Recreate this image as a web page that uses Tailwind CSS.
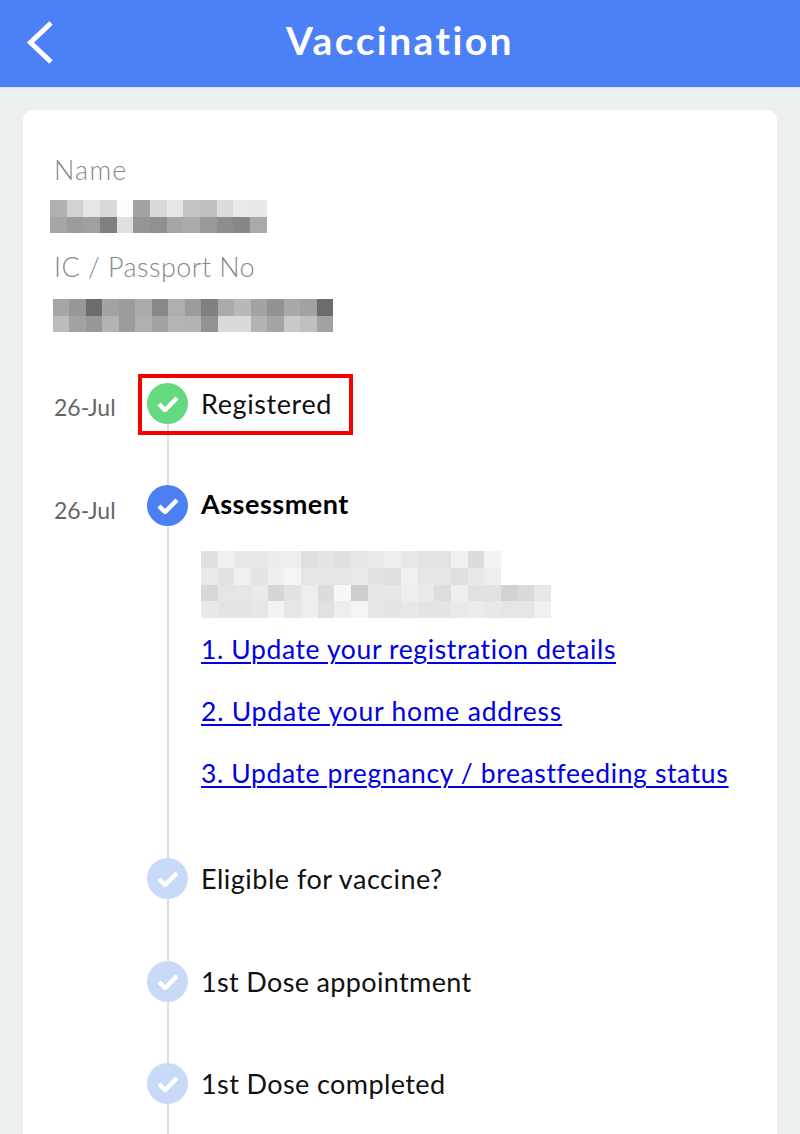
<!DOCTYPE html>
<html lang="en">
<head>
    <meta charset="UTF-8">
    <meta name="viewport" content="width=device-width, initial-scale=1.0">
    <title>Vaccination</title>
    <script src="https://cdn.jsdelivr.net/npm/@tailwindcss/browser@4"></script>
</head>
<body class="bg-[#ebeff0] h-[1134px] overflow-hidden flex flex-col font-['Lato',sans-serif]">
    <!-- Header -->
    <header class="bg-[#4c80f6] h-[88px] shrink-0 border-b border-[#dfe7f8] flex items-center justify-center relative">
        <svg class="absolute left-[26px] top-[21px]" width="28" height="44" viewBox="0 0 28 44" fill="none" stroke="#fff" stroke-width="5">
            <path d="M25 2 L4.5 21.5 L25 41"/>
        </svg>
        <h1 class="text-white text-[39px] font-bold tracking-[2.4px] leading-none -mt-[7px]">Vaccination</h1>
    </header>

    <!-- Card -->
    <main class="flex-1 min-h-0 mt-[22px] mx-[23px] bg-white rounded-t-[10px] pl-[32px] pt-[42px] overflow-hidden flex flex-col">
        <p class="-ml-[1px] text-[27px] leading-[36px] font-light tracking-[1.2px] text-[#888888]">Name</p>
        <div class="grid grid-cols-[repeat(13,16.67px)] grid-rows-[repeat(2,16.5px)] -ml-[5px] mt-[12px]">
            <div class="bg-[#b0b0b0]"></div><div class="bg-[#d2d2d2]"></div><div class="bg-[#e6e6e6]"></div><div class="bg-[#dadada]"></div><div class="bg-[#fdfdfd]"></div><div class="bg-[#a3a3a3]"></div><div class="bg-[#d9d9d9]"></div><div class="bg-[#e7e7e7]"></div><div class="bg-[#c5c5c5]"></div><div class="bg-[#c0c0c0]"></div><div class="bg-[#dcdcdc]"></div><div class="bg-[#eaeaea]"></div><div class="bg-[#e8e8e8]"></div>
            <div class="bg-[#a6a6a6]"></div><div class="bg-[#9c9c9c]"></div><div class="bg-[#a0a0a0]"></div><div class="bg-[#808080]"></div><div class="bg-[#e0e0e0]"></div><div class="bg-[#959595]"></div><div class="bg-[#909090]"></div><div class="bg-[#a6a6a6]"></div><div class="bg-[#ababab]"></div><div class="bg-[#999999]"></div><div class="bg-[#8d8d8d]"></div><div class="bg-[#878787]"></div><div class="bg-[#aaaaaa]"></div>
        </div>
        <p class="-ml-[1px] text-[27px] leading-[36px] font-light tracking-[0.45px] text-[#888888] mt-[16px]">IC / Passport No</p>
        <div class="grid grid-cols-[repeat(17,16.47px)] grid-rows-[repeat(2,16.5px)] -ml-[2px] mt-[14px]">
            <div class="bg-[#a6a6a6]"></div><div class="bg-[#989898]"></div><div class="bg-[#6c6c6c]"></div><div class="bg-[#a3a3a3]"></div><div class="bg-[#9c9c9c]"></div><div class="bg-[#ababab]"></div><div class="bg-[#888888]"></div><div class="bg-[#aeaeae]"></div><div class="bg-[#9c9c9c]"></div><div class="bg-[#808080]"></div><div class="bg-[#aaaaaa]"></div><div class="bg-[#b8b8b8]"></div><div class="bg-[#a3a3a3]"></div><div class="bg-[#929292]"></div><div class="bg-[#a9a9a9]"></div><div class="bg-[#a2a2a2]"></div><div class="bg-[#6c6c6c]"></div>
            <div class="bg-[#bcbcbc]"></div><div class="bg-[#a2a2a2]"></div><div class="bg-[#989898]"></div><div class="bg-[#b3b3b3]"></div><div class="bg-[#9c9c9c]"></div><div class="bg-[#b0b0b0]"></div><div class="bg-[#a3a3a3]"></div><div class="bg-[#b5b5b5]"></div><div class="bg-[#b3b3b3]"></div><div class="bg-[#939393]"></div><div class="bg-[#dadada]"></div><div class="bg-[#dadada]"></div><div class="bg-[#b3b3b3]"></div><div class="bg-[#a4a4a4]"></div><div class="bg-[#c9c9c9]"></div><div class="bg-[#bfbfbf]"></div><div class="bg-[#a2a2a2]"></div>
        </div>

        <!-- Timeline -->
        <div class="mt-[51px]">
            <!-- Registered -->
            <div class="flex h-[102px] relative">
                <span class="-ml-[1px] w-[93px] pt-[8px] text-[23px] leading-[32px] text-[#666666]">26-Jul</span>
                <div class="w-[41px] flex flex-col items-center">
                    <div class="w-[41px] h-[41px] rounded-full bg-[#65d97f] flex items-center justify-center shrink-0">
                        <svg width="22" height="16" viewBox="0 0 22 16" fill="none" stroke="#fff" stroke-width="4.5"><path d="M2 8 L8 14 L20 2"/></svg>
                    </div>
                    <div class="w-[2px] flex-1 bg-[#dedede]"></div>
                </div>
                <p class="pl-[13px] text-[27px] leading-[41px] tracking-[0.6px] text-[#111111]">Registered</p>
                <div class="absolute left-[83px] -top-[9px] w-[215px] h-[61px] border-[4px] border-[#f80000]"></div>
            </div>
            <!-- Assessment -->
            <div class="flex h-[373px]">
                <span class="-ml-[1px] w-[93px] pt-[9px] text-[23px] leading-[32px] text-[#666666]">26-Jul</span>
                <div class="w-[41px] flex flex-col items-center">
                    <div class="w-[41px] h-[41px] rounded-full bg-[#4c80f0] flex items-center justify-center shrink-0">
                        <svg width="22" height="16" viewBox="0 0 22 16" fill="none" stroke="#fff" stroke-width="4.5"><path d="M2 8 L8 14 L20 2"/></svg>
                    </div>
                    <div class="w-[2px] flex-1 bg-[#dedede]"></div>
                </div>
                <div class="pl-[13px] flex flex-col items-start">
                    <p class="-mt-[2px] text-[27px] leading-[41px] font-bold tracking-[0.5px] text-black">Assessment</p>
                    <div class="grid grid-cols-[repeat(21,16.67px)] grid-rows-[repeat(4,16.75px)] mt-[27px]">
                        <div class="bg-[#e0e0e0]"></div><div class="bg-[#f0f0f0]"></div><div class="bg-[#e8e8e8]"></div><div class="bg-[#e8e8e8]"></div><div class="bg-[#ededed]"></div><div class="bg-[#eeeeee]"></div><div class="bg-[#e0e0e0]"></div><div class="bg-[#e4e4e4]"></div><div class="bg-[#e0e0e0]"></div><div class="bg-[#e6e6e6]"></div><div class="bg-[#eaeaea]"></div><div class="bg-[#eeeeee]"></div><div class="bg-[#e8e8e8]"></div><div class="bg-[#e3e3e3]"></div><div class="bg-[#e3e3e3]"></div><div class="bg-[#f0f0f0]"></div><div class="bg-[#dcdcdc]"></div><div class="bg-[#f3f3f3]"></div><div></div><div></div><div></div>
                        <div class="bg-[#eaeaea]"></div><div class="bg-[#e2e2e2]"></div><div class="bg-[#f0f0f0]"></div><div class="bg-[#e4e4e4]"></div><div class="bg-[#efefef]"></div><div class="bg-[#f5f5f5]"></div><div class="bg-[#e6e6e6]"></div><div class="bg-[#e5e5e5]"></div><div class="bg-[#e6e6e6]"></div><div class="bg-[#eaeaea]"></div><div class="bg-[#e2e2e2]"></div><div class="bg-[#dfdfdf]"></div><div class="bg-[#f0f0f0]"></div><div class="bg-[#e6e6e6]"></div><div class="bg-[#e6e6e6]"></div><div class="bg-[#e0e0e0]"></div><div class="bg-[#e8e8e8]"></div><div class="bg-[#eeeeee]"></div><div></div><div></div><div></div>
                        <div class="bg-[#d8d8d8]"></div><div class="bg-[#e5e5e5]"></div><div class="bg-[#e6e6e6]"></div><div class="bg-[#eaeaea]"></div><div class="bg-[#d6d6d6]"></div><div class="bg-[#e2e2e2]"></div><div class="bg-[#eeeeee]"></div><div class="bg-[#dcdcdc]"></div><div class="bg-[#f8f8f8]"></div><div class="bg-[#cccccc]"></div><div class="bg-[#e6e6e6]"></div><div class="bg-[#e6e6e6]"></div><div class="bg-[#eeeeee]"></div><div class="bg-[#eaeaea]"></div><div class="bg-[#dddddd]"></div><div class="bg-[#efefef]"></div><div class="bg-[#e2e2e2]"></div><div class="bg-[#e2e2e2]"></div><div class="bg-[#d2d2d2]"></div><div class="bg-[#dadada]"></div><div class="bg-[#e8e8e8]"></div>
                        <div class="bg-[#e9e9e9]"></div><div class="bg-[#e4e4e4]"></div><div class="bg-[#e4e4e4]"></div><div class="bg-[#e6e6e6]"></div><div class="bg-[#f3f3f3]"></div><div class="bg-[#e6e6e6]"></div><div class="bg-[#eeeeee]"></div><div class="bg-[#e1e1e1]"></div><div class="bg-[#eeeeee]"></div><div class="bg-[#f4f4f4]"></div><div class="bg-[#e6e6e6]"></div><div class="bg-[#e4e4e4]"></div><div class="bg-[#e8e8e8]"></div><div class="bg-[#e4e4e4]"></div><div class="bg-[#e4e4e4]"></div><div class="bg-[#eaeaea]"></div><div class="bg-[#ececec]"></div><div class="bg-[#e8e8e8]"></div><div class="bg-[#e5e5e5]"></div><div class="bg-[#e5e5e5]"></div><div class="bg-[#f0f0f0]"></div>
                    </div>
                    <div class="flex flex-col text-[26.5px] leading-[62px] text-[#0000e6] underline underline-offset-[3px] decoration-[2px] whitespace-nowrap">
                        <a href="#" class="tracking-[0.62px]">1. Update your registration details</a>
                        <a href="#" class="tracking-[0.78px]">2. Update your home address</a>
                        <a href="#" class="tracking-[0.62px]">3. Update pregnancy / breastfeeding status</a>
                    </div>
                </div>
            </div>
            <!-- Eligible -->
            <div class="flex h-[103px]">
                <span class="w-[92px]"></span>
                <div class="w-[41px] flex flex-col items-center">
                    <div class="w-[41px] h-[41px] rounded-full bg-[#c9daf9] flex items-center justify-center shrink-0">
                        <svg width="22" height="16" viewBox="0 0 22 16" fill="none" stroke="#fff" stroke-width="4.5"><path d="M2 8 L8 14 L20 2"/></svg>
                    </div>
                    <div class="w-[2px] flex-1 bg-[#dedede]"></div>
                </div>
                <p class="pl-[13px] text-[27px] leading-[41px] tracking-[0.5px] text-[#111111]">Eligible for vaccine?</p>
            </div>
            <!-- 1st dose appointment -->
            <div class="flex h-[102px]">
                <span class="w-[92px]"></span>
                <div class="w-[41px] flex flex-col items-center">
                    <div class="w-[41px] h-[41px] rounded-full bg-[#c9daf9] flex items-center justify-center shrink-0">
                        <svg width="22" height="16" viewBox="0 0 22 16" fill="none" stroke="#fff" stroke-width="4.5"><path d="M2 8 L8 14 L20 2"/></svg>
                    </div>
                    <div class="w-[2px] flex-1 bg-[#dedede]"></div>
                </div>
                <p class="pl-[13px] text-[27px] leading-[41px] tracking-[0.35px] text-[#111111]">1st Dose appointment</p>
            </div>
            <!-- 1st dose completed -->
            <div class="flex h-[80px]">
                <span class="w-[92px]"></span>
                <div class="w-[41px] flex flex-col items-center">
                    <div class="w-[41px] h-[41px] rounded-full bg-[#c9daf9] flex items-center justify-center shrink-0">
                        <svg width="22" height="16" viewBox="0 0 22 16" fill="none" stroke="#fff" stroke-width="4.5"><path d="M2 8 L8 14 L20 2"/></svg>
                    </div>
                    <div class="w-[2px] flex-1 bg-[#dedede]"></div>
                </div>
                <p class="pl-[13px] text-[27px] leading-[41px] tracking-[0.4px] text-[#111111]">1st Dose completed</p>
            </div>
        </div>
    </main>
</body>
</html>
